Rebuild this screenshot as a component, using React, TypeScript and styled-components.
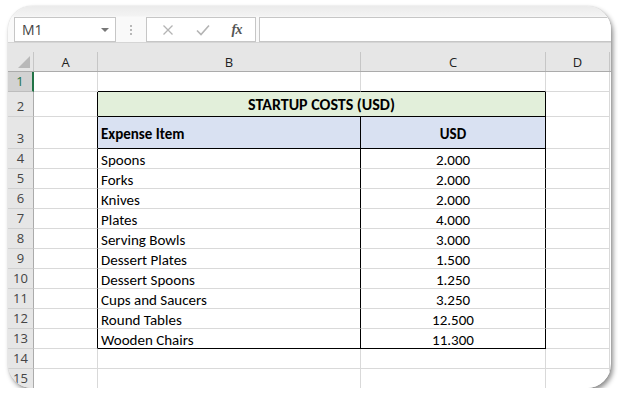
import React from 'react';
import styled, { createGlobalStyle } from 'styled-components';

const GlobalStyle = createGlobalStyle`
  html, body {
    margin: 0;
    padding: 0;
    background: #ffffff;
  }
  body {
    font-family: 'Lato', 'Liberation Sans', sans-serif;
  }
`;

const UI_FONT = `'Open Sans', 'Noto Sans', 'Liberation Sans', sans-serif`;
const CELL_FONT = `'Carlito', 'Lato', 'Liberation Sans', sans-serif`;
const GRID = '#d9d9d9';
const DARK = '#000000';

const Page = styled.div`
  padding: 6px 0 0 8px;
`;

const Frame = styled.div`
  width: 603px;
  height: 382px;
  border-radius: 24px;
  overflow: hidden;
  background: #ffffff;
  box-shadow: 2px 3px 5px rgba(0, 0, 0, 0.45), 0 0 1px rgba(0, 0, 0, 0.25);
  display: flex;
  flex-direction: column;
`;

const Toolbar = styled.div`
  height: 37px;
  box-sizing: border-box;
  padding: 11px 0 0 6px;
  background: linear-gradient(#ebebeb 0, #f3f3f3 10px, #f9f9f9 11px);
  border-bottom: 1px solid #d5d5d5;
  display: flex;
  align-items: flex-start;
`;

const NameBox = styled.div`
  width: 102px;
  height: 25px;
  box-sizing: border-box;
  background: #ffffff;
  border: 1px solid #c6c6c6;
  display: flex;
  align-items: center;
  padding: 0 6px 0 7px;
  font-family: ${UI_FONT};
  font-size: 14px;
  color: #444444;
`;

const NameText = styled.span`
  flex: 1;
`;

const DropArrow = styled.span`
  width: 0;
  height: 0;
  border-left: 4px solid transparent;
  border-right: 4px solid transparent;
  border-top: 4px solid #777777;
  margin-top: 1px;
`;

const Grip = styled.div`
  width: 30px;
  height: 25px;
  display: flex;
  flex-direction: column;
  align-items: center;
  justify-content: center;
  gap: 2px;
`;

const Dot = styled.span`
  width: 2px;
  height: 2px;
  background: #b8b8b8;
`;

const FxBox = styled.div`
  width: 110px;
  height: 25px;
  box-sizing: border-box;
  background: #ffffff;
  border: 1px solid #c6c6c6;
  display: flex;
  align-items: center;
  justify-content: space-around;
  padding: 0 2px 0 4px;
`;

const Fx = styled.span`
  font-family: 'Liberation Serif', serif;
  font-style: italic;
  font-weight: 700;
  font-size: 14px;
  color: #555555;
  letter-spacing: -0.5px;
`;

const FormulaInput = styled.div`
  flex: 1;
  height: 25px;
  box-sizing: border-box;
  margin-left: 3px;
  background: #ffffff;
  border: 1px solid #c6c6c6;
  border-right: none;
`;

const Sheet = styled.div`
  flex: 1;
  display: flex;
  flex-direction: column;
`;

const HeaderRow = styled.div`
  height: 29px;
  box-sizing: border-box;
  padding-top: 9px;
  background: #e6e6e6;
  border-bottom: 1px solid #ababab;
  display: flex;
`;

const Corner = styled.div`
  width: 26px;
  box-sizing: border-box;
  border-right: 1px solid #c6c6c6;
  position: relative;
`;

const CornerMark = styled.svg`
  position: absolute;
  right: 3px;
  bottom: 3px;
`;

const ColHead = styled.div<{ $w: number }>`
  width: ${(p) => p.$w}px;
  flex: none;
  box-sizing: border-box;
  border-right: 1px solid #c6c6c6;
  display: flex;
  align-items: center;
  justify-content: center;
  font-family: ${UI_FONT};
  font-size: 13px;
  color: #222222;
`;

const Row = styled.div<{ $h: number }>`
  height: ${(p) => p.$h}px;
  flex: none;
  display: flex;
`;

const RowHead = styled.div<{ $active?: boolean }>`
  width: 26px;
  flex: none;
  box-sizing: border-box;
  background: ${(p) => (p.$active ? '#d2d2d2' : '#e6e6e6')};
  border-bottom: 1px solid ${(p) => (p.$active ? '#bdbdbd' : '#d0d0d0')};
  border-right: ${(p) => (p.$active ? '2px solid #217346' : '1px solid #ababab')};
  display: flex;
  align-items: flex-end;
  justify-content: center;
  padding-bottom: 1px;
  font-family: ${UI_FONT};
  font-size: 13px;
  line-height: 17px;
  color: ${(p) => (p.$active ? '#217346' : '#444444')};
`;

const Cell = styled.div<{
  $w: number;
  $bg?: string;
  $bold?: boolean;
  $size?: number;
  $align?: 'left' | 'center';
  $middle?: boolean;
  $darkRight?: boolean;
  $darkBottom?: boolean;
}>`
  width: ${(p) => p.$w}px;
  flex: none;
  box-sizing: border-box;
  background: ${(p) => p.$bg || '#ffffff'};
  border-right: 1px solid ${(p) => (p.$darkRight ? DARK : GRID)};
  border-bottom: 1px solid ${(p) => (p.$darkBottom ? DARK : GRID)};
  display: flex;
  align-items: ${(p) => (p.$middle ? 'center' : 'flex-end')};
  justify-content: ${(p) => (p.$align === 'center' ? 'center' : 'flex-start')};
  padding: ${(p) => (p.$middle ? '2px 3px 0' : '0 3px')};
  font-family: ${CELL_FONT};
  font-size: ${(p) => p.$size || 15}px;
  line-height: ${(p) => (p.$middle ? 18 : 16)}px;
  font-weight: ${(p) => (p.$bold ? 700 : 400)};
  color: #000000;
  white-space: nowrap;
`;

const COLS = { A: 64, B: 263, C: 185, D: 64 };

const items: [string, string][] = [
  ['Spoons', '2.000'],
  ['Forks', '2.000'],
  ['Knives', '2.000'],
  ['Plates', '4.000'],
  ['Serving Bowls', '3.000'],
  ['Dessert Plates', '1.500'],
  ['Dessert Spoons', '1.250'],
  ['Cups and Saucers', '3.250'],
  ['Round Tables', '12.500'],
  ['Wooden Chairs', '11.300'],
];

const GREEN = '#e2efda';
const BLUE = '#d9e1f2';

export default function App() {
  return (
    <Page>
      <GlobalStyle />
      <Frame>
        <Toolbar>
          <NameBox>
            <NameText>M1</NameText>
            <DropArrow />
          </NameBox>
          <Grip>
            <Dot />
            <Dot />
            <Dot />
          </Grip>
          <FxBox>
            <svg width="12" height="12" viewBox="0 0 12 12">
              <path d="M1.5 1.5 L10.5 10.5 M10.5 1.5 L1.5 10.5" stroke="#b4b4b4" strokeWidth="1.3" fill="none" />
            </svg>
            <svg width="14" height="12" viewBox="0 0 14 12">
              <path d="M1 6.5 L5 10.5 L13 1.5" stroke="#b4b4b4" strokeWidth="1.6" fill="none" />
            </svg>
            <Fx>fx</Fx>
          </FxBox>
          <FormulaInput />
        </Toolbar>
        <Sheet>
          <HeaderRow>
            <Corner>
              <CornerMark width="12" height="12" viewBox="0 0 12 12">
                <polygon points="12,0 12,12 0,12" fill="#b9b9b9" />
              </CornerMark>
            </Corner>
            <ColHead $w={COLS.A}>A</ColHead>
            <ColHead $w={COLS.B}>B</ColHead>
            <ColHead $w={COLS.C}>C</ColHead>
            <ColHead $w={COLS.D}>D</ColHead>
          </HeaderRow>

          <Row $h={20}>
            <RowHead $active>1</RowHead>
            <Cell $w={COLS.A} />
            <Cell $w={COLS.B} $darkBottom />
            <Cell $w={COLS.C} $darkBottom />
            <Cell $w={COLS.D} />
          </Row>

          <Row $h={25}>
            <RowHead>2</RowHead>
            <Cell $w={COLS.A} $darkRight />
            <Cell
              $w={COLS.B + COLS.C}
              $bg={GREEN}
              $bold
              $size={16}
              $middle
              $align="center"
              $darkRight
              $darkBottom
            >
              STARTUP COSTS (USD)
            </Cell>
            <Cell $w={COLS.D} />
          </Row>

          <Row $h={32}>
            <RowHead>3</RowHead>
            <Cell $w={COLS.A} $darkRight />
            <Cell $w={COLS.B} $bg={BLUE} $bold $middle $darkRight $darkBottom>
              Expense Item
            </Cell>
            <Cell $w={COLS.C} $bg={BLUE} $bold $middle $align="center" $darkRight $darkBottom>
              USD
            </Cell>
            <Cell $w={COLS.D} />
          </Row>

          {items.map(([name, cost], i) => {
            const last = i === items.length - 1;
            return (
              <Row $h={20} key={name}>
                <RowHead>{i + 4}</RowHead>
                <Cell $w={COLS.A} $darkRight />
                <Cell $w={COLS.B} $darkRight $darkBottom={last}>
                  {name}
                </Cell>
                <Cell $w={COLS.C} $align="center" $darkRight $darkBottom={last}>
                  {cost}
                </Cell>
                <Cell $w={COLS.D} />
              </Row>
            );
          })}

          {[14, 15].map((n) => (
            <Row $h={20} key={n}>
              <RowHead>{n}</RowHead>
              <Cell $w={COLS.A} />
              <Cell $w={COLS.B} />
              <Cell $w={COLS.C} />
              <Cell $w={COLS.D} />
            </Row>
          ))}
        </Sheet>
      </Frame>
    </Page>
  );
}
